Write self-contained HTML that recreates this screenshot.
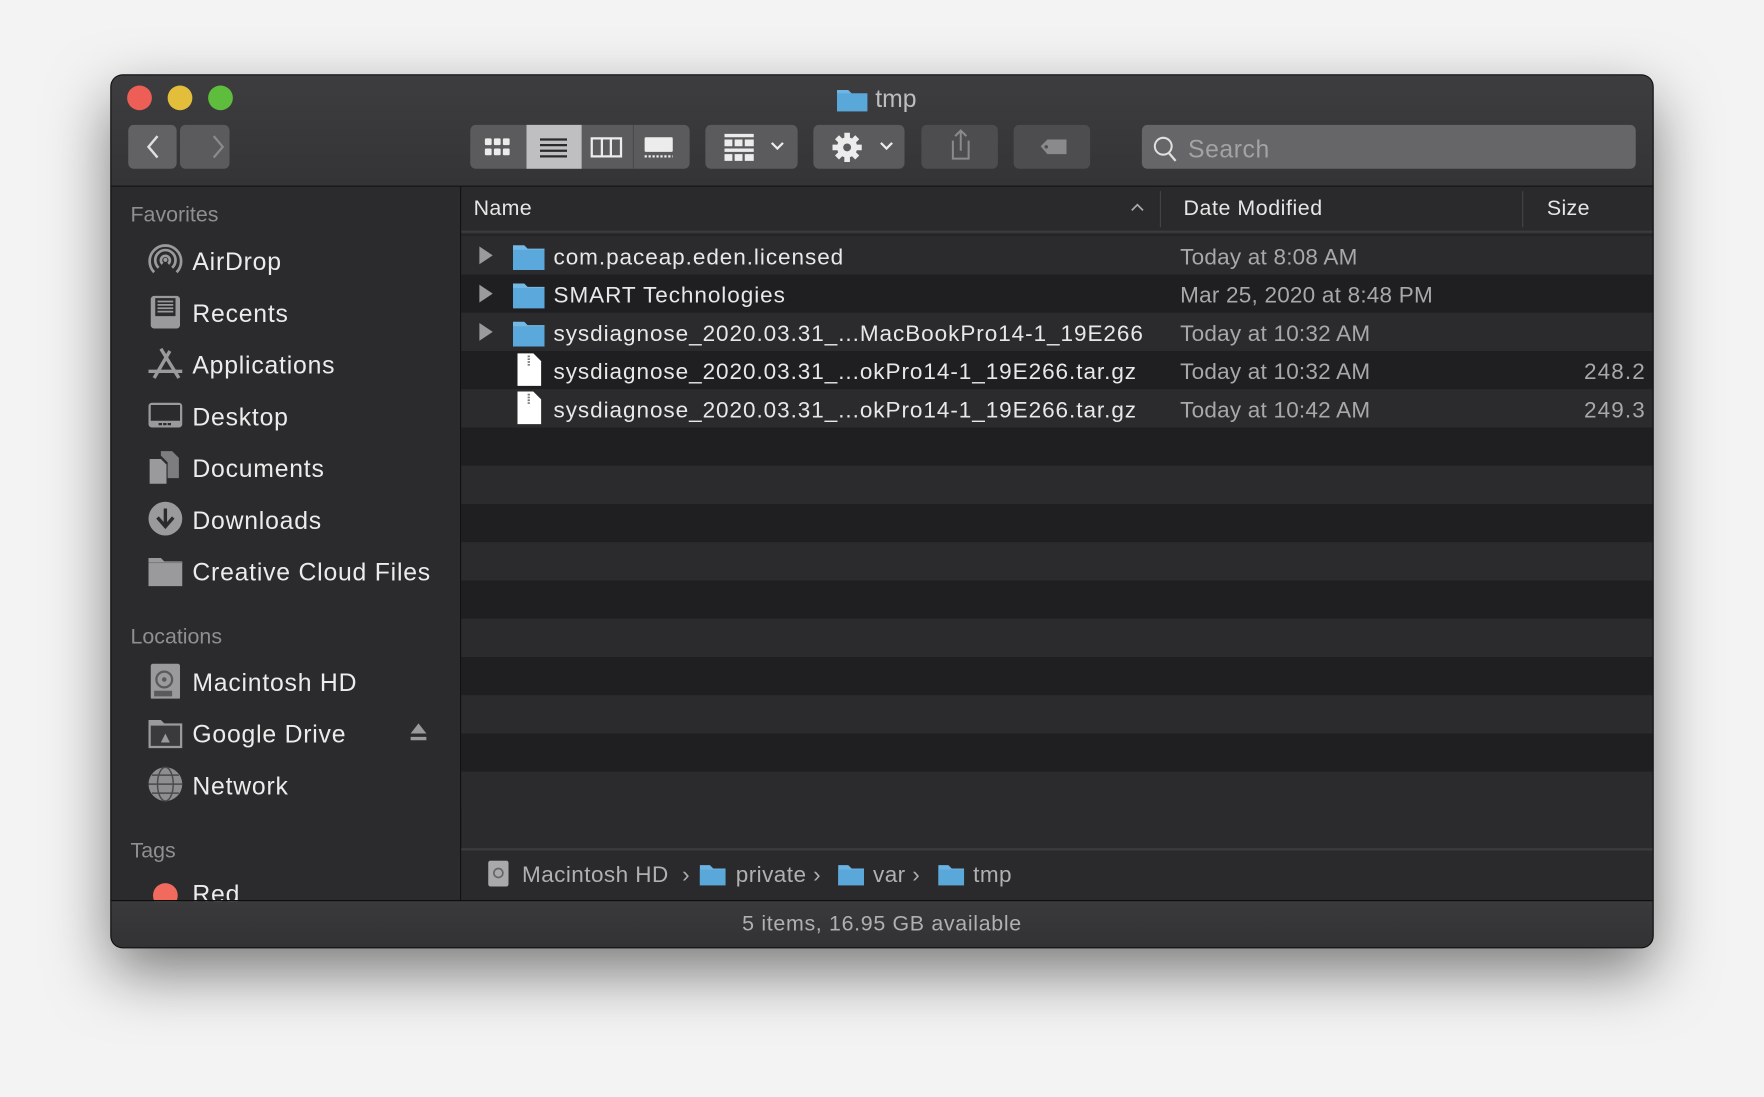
<!DOCTYPE html>
<html><head><meta charset="utf-8"><style>
html,body{margin:0;padding:0;width:1764px;height:1096px;overflow:hidden;background:#f3f3f3;}
#s{position:absolute;left:0;top:0;width:1568px;height:975px;transform:scale(1.125);transform-origin:0 0;font-family:"Liberation Sans",sans-serif;}
.a{position:absolute;}
#win{left:99px;top:67px;width:1370px;height:775px;border-radius:10px;overflow:hidden;background:#2b2b2d;box-shadow:0 22px 55px rgba(0,0,0,.5),0 0 0 1px #111;}
#tb{left:0;top:0;width:1370px;height:98px;background:linear-gradient(#3d3d3f,#343436);border-bottom:1px solid #111;}
.dot{width:22px;height:22px;border-radius:50%;top:9px;}
.btn{background:#5b5b5d;border-radius:5px;height:39px;top:44px;}
#sb{left:0;top:99px;width:310px;height:634px;background:#2b2b2d;border-right:1px solid #0e0e0e;}
.sh{color:#8f8f91;font-size:19px;left:17px;margin-top:2px;}
.si{color:#ececec;font-size:22px;left:72px;letter-spacing:.7px;margin-top:2px;}
.ic{left:32px;width:32px;height:32px;}
.row{left:311px;width:1059px;height:34px;}
.rt{color:#e8e8e8;font-size:20px;top:8px;white-space:nowrap;letter-spacing:.85px;}
.rd{color:#a8a8aa;font-size:20px;top:8px;left:639px;white-space:nowrap;letter-spacing:.2px;}
</style></head><body><div id="s">
<div id="win" class="a">
 <div id="tb" class="a">
  <div class="a dot" style="left:14px;background:#ed5f56"></div>
  <div class="a dot" style="left:50px;background:#e2be3b"></div>
  <div class="a dot" style="left:86px;background:#5fbd3e"></div>
  <svg class="a" style="left:645px;top:10px" width="27" height="22"><path d="M0 3h10l3 3h14v16H0z" fill="#6eb5e3"/><rect y="6" width="27" height="16" fill="#5aa7da"/></svg>
  <div class="a" style="left:679px;top:8px;color:#bdbdbf;font-size:22px">tmp</div>
  <div class="a btn" style="left:15px;width:43px;background:#626264"></div>
  <div class="a btn" style="left:61px;width:44px"></div>
  <svg class="a" style="left:15px;top:44px" width="90" height="39"><path d="M26 10l-8 9.5 8 9.5" stroke="#e0e0e0" stroke-width="2.2" fill="none"/><path d="M78 10l8 9.5-8 9.5" stroke="#8a8a8c" stroke-width="2" fill="none" transform="translate(-2 0)"/></svg>
  <div class="a btn" style="left:319px;width:195px"></div>
  <div class="a" style="left:369px;top:44px;width:49px;height:39px;background:#bfbfc1"></div>
  <svg class="a" style="left:319px;top:44px" width="195" height="39">
   <g fill="#ececec"><rect x="13" y="12" width="6" height="6" rx="1"/><rect x="21" y="12" width="6" height="6" rx="1"/><rect x="29" y="12" width="6" height="6" rx="1"/><rect x="13" y="21" width="6" height="6" rx="1"/><rect x="21" y="21" width="6" height="6" rx="1"/><rect x="29" y="21" width="6" height="6" rx="1"/></g>
   <g stroke="#2a2a2a" stroke-width="2"><path d="M62 13h24M62 18h24M62 23h24M62 28h24"/></g>
   <rect x="108" y="12" width="26" height="16" stroke="#ececec" stroke-width="2" fill="none"/><path d="M117 12v16M125 12v16" stroke="#ececec" stroke-width="2"/>
   <rect x="155" y="11" width="25" height="13" rx="1" fill="#ececec"/><path d="M155 28h25" stroke="#ececec" stroke-width="2" stroke-dasharray="2 1.5"/>
   <path d="M145 0v39" stroke="#4a4a4c"/>
  </svg>
  <div class="a btn" style="left:528px;width:82px"></div>
  <svg class="a" style="left:528px;top:44px" width="82" height="39"><g fill="#ececec"><rect x="17" y="8" width="26" height="3"/><rect x="17" y="13" width="7" height="6"/><rect x="26" y="13" width="7" height="6"/><rect x="35" y="13" width="8" height="6"/><rect x="17" y="21" width="26" height="3"/><rect x="17" y="26" width="7" height="6"/><rect x="26" y="26" width="7" height="6"/><rect x="35" y="26" width="8" height="6"/></g><path d="M59 16l5 5 5-5" stroke="#ececec" stroke-width="2" fill="none"/></svg>
  <div class="a btn" style="left:624px;width:81px"></div>
  <svg class="a" style="left:624px;top:44px" width="81" height="39"><g transform="translate(30 20)"><circle r="9" fill="#ececec"/><g stroke="#ececec" stroke-width="5"><path d="M0-13V13M-13 0H13M-9-9L9 9M9-9L-9 9"/></g><circle r="3.5" fill="#5b5b5d"/></g><path d="M60 16l5 5 5-5" stroke="#ececec" stroke-width="2" fill="none"/></svg>
  <div class="a btn" style="left:720px;width:68px;background:#4d4d4f"></div>
  <svg class="a" style="left:720px;top:44px" width="68" height="39"><path d="M28 14v16h14V14M35 5v18M30 10l5-5 5 5" stroke="#8a8a8c" stroke-width="1.8" fill="none"/></svg>
  <div class="a btn" style="left:802px;width:68px;background:#4d4d4f"></div>
  <svg class="a" style="left:802px;top:44px" width="68" height="39"><path d="M24 19l6-6h17v13H30z" fill="#8a8a8c"/><circle cx="29" cy="19.5" r="1.5" fill="#4d4d4f"/></svg>
  <div class="a btn" style="left:916px;width:439px;background:#666668"></div>
  <svg class="a" style="left:924px;top:53px" width="26" height="26"><circle cx="11" cy="10" r="7.5" stroke="#e0e0e0" stroke-width="1.8" fill="none"/><path d="M16 16l6 7" stroke="#e0e0e0" stroke-width="2"/></svg>
  <div class="a" style="left:957px;top:53px;color:#a3a3a5;font-size:22px;letter-spacing:.5px">Search</div>
 </div>
 <div id="sb" class="a">
  <div class="a sh" style="top:13px">Favorites</div>
  <svg class="a ic" style="top:49px"><g stroke="#9a9a9c" stroke-width="2.4" fill="none"><path d="M6 27A14 14 0 1 1 26 27"/><path d="M10 23A9 9 0 1 1 22 23"/><path d="M13.5 19.5A4 4 0 1 1 18.5 19.5"/></g><circle cx="16" cy="16" r="1.8" fill="#9a9a9c"/></svg>
  <div class="a si" style="top:52px">AirDrop</div>
  <svg class="a ic" style="top:95px"><rect x="3" y="2" width="26" height="29" rx="3" fill="#9a9a9c"/><rect x="7" y="4" width="18" height="16" fill="#2b2b2d"/><path d="M9 7h14M9 10h14M9 13h14M9 16h14" stroke="#9a9a9c" stroke-width="1.5"/></svg>
  <div class="a si" style="top:98px">Recents</div>
  <svg class="a ic" style="top:141px"><g stroke="#9a9a9c" stroke-width="3" fill="none"><path d="M12 3l16 26M20 5L6 29M1 23h30"/></g></svg>
  <div class="a si" style="top:144px">Applications</div>
  <svg class="a ic" style="top:187px"><rect x="1" y="5" width="30" height="22" rx="3" fill="#9a9a9c"/><rect x="3" y="7" width="26" height="14" fill="#2b2b2d"/><path d="M10 24h12" stroke="#2b2b2d" stroke-width="2" stroke-dasharray="3 1"/></svg>
  <div class="a si" style="top:190px">Desktop</div>
  <svg class="a ic" style="top:233px"><path d="M2 9h10l5 5v17H2z" fill="#9a9a9c"/><path d="M12 2h10l6 6v18H18V12l-6-6z" fill="#7d7d7f"/></svg>
  <div class="a si" style="top:236px">Documents</div>
  <svg class="a ic" style="top:279px"><circle cx="16" cy="16" r="15" fill="#9a9a9c"/><path d="M16 7v15M9 15l7 8 7-8" stroke="#2b2b2d" stroke-width="3" fill="none"/></svg>
  <div class="a si" style="top:282px">Downloads</div>
  <svg class="a ic" style="top:325px"><path d="M1 5h11l3 3h16v22H1z" fill="#9a9a9c"/><path d="M1 9h30" stroke="#7d7d7f"/></svg>
  <div class="a si" style="top:328px">Creative Cloud Files</div>
  <div class="a sh" style="top:388px">Locations</div>
  <svg class="a ic" style="top:423px"><rect x="3" y="1" width="26" height="32" rx="2" fill="#9a9a9c"/><circle cx="15" cy="15" r="7" fill="none" stroke="#5a5a5c" stroke-width="2"/><circle cx="15" cy="15" r="2" fill="#5a5a5c"/><rect x="6" y="25" width="16" height="5" fill="#5a5a5c"/></svg>
  <div class="a si" style="top:426px">Macintosh HD</div>
  <svg class="a ic" style="top:469px"><path d="M1 5h11l3 3h16v22H1z" fill="#9a9a9c"/><rect x="3" y="10" width="26" height="18" fill="#3a3a3c"/><path d="M12 25l4-8 4 8z" fill="#9a9a9c"/></svg>
  <div class="a si" style="top:472px">Google Drive</div>
  <svg class="a" style="left:265px;top:476px" width="16" height="20"><path d="M8 1l7 9H1z" fill="#9a9a9c"/><rect x="1" y="13" width="14" height="3" fill="#9a9a9c"/></svg>
  <svg class="a ic" style="top:515px"><circle cx="16" cy="16" r="15" fill="#8e8e90"/><g stroke="#4a4a4c" stroke-width="1.3" fill="none"><ellipse cx="16" cy="16" rx="7" ry="15"/><path d="M1 16h30M4 8h24M4 24h24"/></g></svg>
  <div class="a si" style="top:518px">Network</div>
  <div class="a sh" style="top:578px">Tags</div>
  <div class="a" style="left:37px;top:619px;width:22px;height:22px;border-radius:50%;background:#f06b5e"></div>
  <div class="a si" style="top:614px">Red</div>
 </div>
 <div class="a" style="left:311px;top:99px;width:1059px;height:39px;background:#2a2a2c;border-bottom:2px solid #3b3b3d"></div>
 <div class="a" style="left:322px;top:108px;color:#e6e6e6;font-size:19px;letter-spacing:.3px">Name</div>
 <svg class="a" style="left:905px;top:113px" width="14" height="10"><path d="M2 7l5-5 5 5" stroke="#aaa" stroke-width="1.5" fill="none"/></svg>
 <div class="a" style="left:932px;top:103px;width:1px;height:32px;background:#444"></div>
 <div class="a" style="left:953px;top:108px;color:#e6e6e6;font-size:19px;letter-spacing:.5px">Date Modified</div>
 <div class="a" style="left:1254px;top:103px;width:1px;height:32px;background:#444"></div>
 <div class="a" style="left:1276px;top:108px;color:#e6e6e6;font-size:19px;letter-spacing:.3px">Size</div>
 <div class="a" style="left:311px;top:141px;width:1059px;height:2px;background:#252527"></div>
 <div class="a row" style="top:143px;background:#2b2b2d"></div>
 <div class="a row" style="top:177px;background:#1f1f21"></div>
 <div class="a row" style="top:211px;background:#2b2b2d"></div>
 <div class="a row" style="top:245px;background:#1f1f21"></div>
 <div class="a row" style="top:279px;background:#2b2b2d"></div>
 <div class="a row" style="top:313px;background:#1f1f21"></div>
 <div class="a row" style="top:347px;background:#2b2b2d"></div>
 <div class="a row" style="top:381px;background:#1f1f21"></div>
 <div class="a row" style="top:415px;background:#2b2b2d"></div>
 <div class="a row" style="top:449px;background:#1f1f21"></div>
 <div class="a row" style="top:483px;background:#2b2b2d"></div>
 <div class="a row" style="top:517px;background:#1f1f21"></div>
 <div class="a row" style="top:551px;background:#2b2b2d"></div>
 <div class="a row" style="top:585px;background:#1f1f21"></div>
 <div class="a row" style="top:619px;background:#2b2b2d;height:32px"></div>
 <div class="a" style="left:311px;top:143px;width:1059px;height:170px">
  <svg class="a" style="left:16px;top:9px" width="12" height="100"><g fill="#9a9a9c"><path d="M0 0l12 8-12 8z"/><path d="M0 34l12 8-12 8z"/><path d="M0 68l12 8-12 8z"/></g></svg>
  <svg class="a" style="left:46px;top:6px" width="28" height="100"><g><path d="M0 2h10l3 3h15v19H0z" fill="#74b9e6"/><rect y="6" width="28" height="18" fill="#5ba8dc"/></g><g transform="translate(0 34)"><path d="M0 2h10l3 3h15v19H0z" fill="#74b9e6"/><rect y="6" width="28" height="18" fill="#5ba8dc"/></g><g transform="translate(0 68)"><path d="M0 2h10l3 3h15v19H0z" fill="#74b9e6"/><rect y="6" width="28" height="18" fill="#5ba8dc"/></g></svg>
  <svg class="a" style="left:50px;top:104px" width="22" height="64"><g><path d="M0 0h14l7 7v22H0z" fill="#fff"/><path d="M10 2v9" stroke="#777" stroke-width="2" stroke-dasharray="1.5 1"/></g><g transform="translate(0 34)"><path d="M0 0h14l7 7v22H0z" fill="#fff"/><path d="M10 2v9" stroke="#777" stroke-width="2" stroke-dasharray="1.5 1"/></g></svg>
  <div class="a rt" style="left:82px">com.paceap.eden.licensed</div>
  <div class="a rt" style="left:82px;top:42px">SMART Technologies</div>
  <div class="a rt" style="left:82px;top:76px">sysdiagnose_2020.03.31_...MacBookPro14-1_19E266</div>
  <div class="a rt" style="left:82px;top:110px">sysdiagnose_2020.03.31_...okPro14-1_19E266.tar.gz</div>
  <div class="a rt" style="left:82px;top:144px">sysdiagnose_2020.03.31_...okPro14-1_19E266.tar.gz</div>
  <div class="a rd">Today at 8:08 AM</div>
  <div class="a rd" style="top:42px">Mar 25, 2020 at 8:48 PM</div>
  <div class="a rd" style="top:76px">Today at 10:32 AM</div>
  <div class="a rd" style="top:110px">Today at 10:32 AM</div>
  <div class="a rd" style="top:144px">Today at 10:42 AM</div>
  <div class="a rd" style="top:110px;left:998px;letter-spacing:1px">248.2</div>
  <div class="a rd" style="top:144px;left:998px;letter-spacing:1px">249.3</div>
 </div>
 <div class="a" style="left:311px;top:687px;width:1059px;height:46px;background:#2a2a2c;border-top:2px solid #3c3c3e"></div>
 <svg class="a" style="left:334px;top:698px" width="20" height="24"><rect x="1" y="0" width="18" height="23" rx="2" fill="#a9a9ab"/><circle cx="10" cy="11" r="4" fill="none" stroke="#666" stroke-width="1.5"/></svg>
 <div class="a" style="left:365px;top:700px;color:#b0b0b2;font-size:20px;white-space:nowrap;letter-spacing:.4px">Macintosh HD &nbsp;›</div>
 <svg class="a" style="left:523px;top:701px" width="23" height="19"><path d="M0 1h9l3 3h11v15H0z" fill="#6bb3e3"/><rect y="5" width="23" height="14" fill="#5aa7da"/></svg>
 <div class="a" style="left:555px;top:700px;color:#b0b0b2;font-size:20px;white-space:nowrap;letter-spacing:.4px">private ›</div>
 <svg class="a" style="left:646px;top:701px" width="23" height="19"><path d="M0 1h9l3 3h11v15H0z" fill="#6bb3e3"/><rect y="5" width="23" height="14" fill="#5aa7da"/></svg>
 <div class="a" style="left:677px;top:700px;color:#b0b0b2;font-size:20px;white-space:nowrap;letter-spacing:.4px">var ›</div>
 <svg class="a" style="left:735px;top:701px" width="23" height="19"><path d="M0 1h9l3 3h11v15H0z" fill="#6bb3e3"/><rect y="5" width="23" height="14" fill="#5aa7da"/></svg>
 <div class="a" style="left:766px;top:700px;color:#b0b0b2;font-size:20px;letter-spacing:.4px">tmp</div>
 <div class="a" style="left:0;top:733px;width:1370px;height:42px;background:linear-gradient(#3a3a3c,#323234);border-top:1px solid #0e0e0e"></div>
 <div class="a" style="left:0;top:744px;width:1370px;text-align:center;color:#b0b0b2;font-size:19px;letter-spacing:.6px">5 items, 16.95 GB available</div>
</div>
</div></body></html>
